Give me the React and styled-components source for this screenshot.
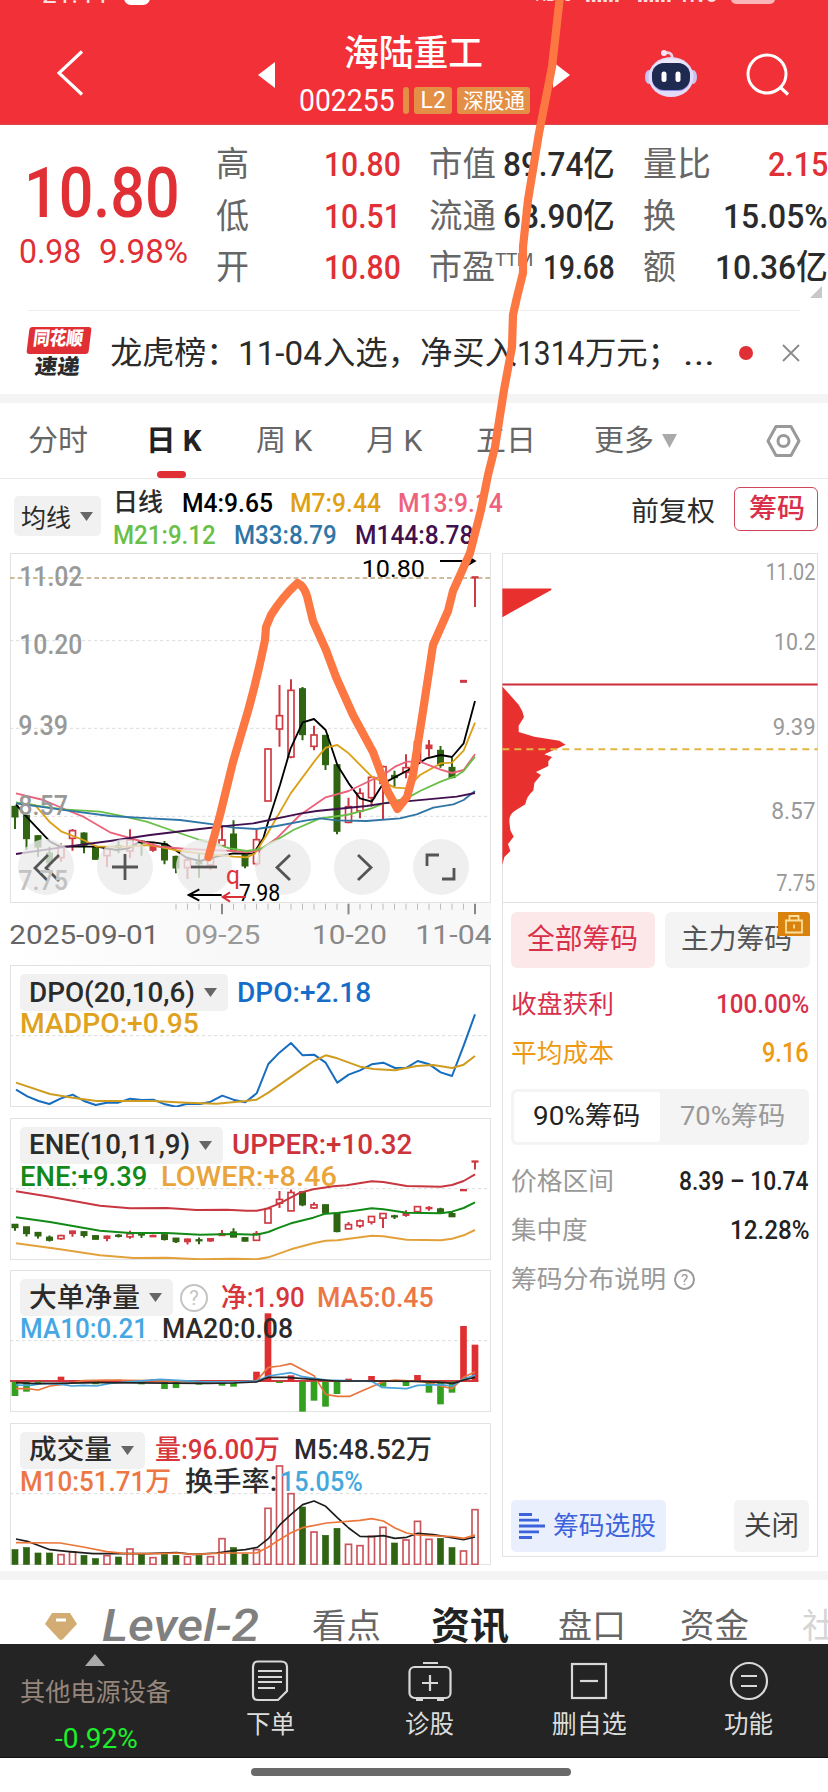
import { useLayoutEffect, useRef, useState } from "react";
import styled, { createGlobalStyle } from "styled-components";

const RED = "#e02f35";
const CANDLE_RED = "#cf3a42";
const GREEN = "#2f6512";

const GlobalStyle = createGlobalStyle`
  * {
    box-sizing: border-box;
  }
  body {
    margin: 0;
    background: #fff;
    font-family: Roboto, "Noto Sans CJK SC", sans-serif;
    color: #2b2b2b;
  }
  svg {
    display: block;
    flex: none;
  }
`;

// squeezes or stretches one line of text to the width of its column
const Fit = ({ w, children, ...rest }) => {
  const ref = useRef(null);
  const [scale, setScale] = useState(1);
  useLayoutEffect(() => {
    setScale(w / ref.current.offsetWidth);
  }, [w, children]);
  return (
    <FitBox $w={w} {...rest}>
      <span ref={ref} style={{ transform: `scaleX(${scale})` }}>
        {children}
      </span>
    </FitBox>
  );
};

const FitBox = styled.div`
  width: ${(p) => p.$w}px;
  flex: none;
  white-space: pre;
  margin-left: ${(p) => p.$ml || 0}px;
  color: ${(p) => p.$color || "inherit"};
  font-size: ${(p) => (p.$size ? `${p.$size}px` : "inherit")};
  font-weight: ${(p) => p.$weight || "inherit"};
  font-style: ${(p) => (p.$italic ? "italic" : "inherit")};
  line-height: ${(p) => (p.$line ? `${p.$line}px` : "inherit")};
  span {
    display: inline-block;
    transform-origin: left center;
  }
`;

const Page = styled.div`
  position: relative;
  width: 828px;
  height: 1792px;
  overflow: hidden;
`;

/* ---------- header ---------- */

const StatusBar = styled.div`
  height: 5px;
  overflow: hidden;
  display: flex;
  align-items: flex-end;
  padding: 0 54px 0 42px;
  color: rgba(255, 255, 255, 0.85);
  line-height: 20px;
  .pill {
    width: 26px;
    height: 20px;
    margin-left: 17px;
    border-radius: 7px;
    background: #fff;
    flex: none;
  }
  .battery {
    width: 44px;
    height: 20px;
    margin: 0 0 1px 14px;
    border-radius: 5px;
    background: #f9b5b8;
    flex: none;
  }
`;
const Header = styled.header`
  height: 125px;
  background: #f23037;
  border-bottom: 1px solid #d94a4e;
  color: #fff;
`;
const TitleBar = styled.div`
  display: flex;
  height: 119px;
  .back {
    margin: 45px 0 0 57px;
  }
  .prev {
    margin: 57px 0 0 174px;
  }
  .next {
    margin: 57px 0 0 22px;
  }
  .robot {
    margin: 38px 0 0 74px;
  }
  .search {
    margin: 46px 0 0 47px;
  }
`;
const Title = styled.div`
  width: 232px;
  margin-left: 24px;
  padding-top: 24px;
  font-weight: 500;
  .name {
    display: flex;
    padding-left: 45px;
    height: 50px;
    line-height: 50px;
  }
  .code {
    display: flex;
    margin-top: 8px;
    height: 27px;
    line-height: 28px;
  }
`;
const Badge = styled.div`
  height: 27px;
  margin-left: ${(p) => p.$ml}px;
  width: ${(p) => p.$w}px;
  background: #e38f45;
  border-radius: 3px;
  display: flex;
  justify-content: center;
  font-weight: 400;
`;

/* ---------- quote ---------- */

const Quote = styled.section`
  height: 185px;
  display: flex;
  position: relative;
  font-weight: 500;
  .corner {
    position: absolute;
    right: 6px;
    bottom: 12px;
  }
`;
const Price = styled.div`
  width: 216px;
  color: ${RED};
  .last {
    padding: 33px 0 0 24px;
    height: 109px;
    line-height: 70px;
  }
  .change {
    display: flex;
    padding: 0 0 0 19px;
    line-height: 34px;
    font-weight: 400;
  }
`;
const Cells = styled.div`
  padding-top: 13px;
  width: ${(p) => p.$w}px;
  margin-right: ${(p) => p.$gap}px;
  flex: none;
`;
const Cell = styled.div`
  display: flex;
  height: 51.5px;
  line-height: 52px;
  font-size: 34px;
  justify-content: space-between;
  .label {
    display: flex;
    color: #666;
    font-weight: 400;
  }
  sup {
    font-size: 19px;
    line-height: 38px;
    width: 0;
    letter-spacing: -0.5px;
    vertical-align: top;
  }
`;

const News = styled.section`
  height: 84px;
  border-top: 1px solid #ededed;
  margin: 0 28px;
  display: flex;
  align-items: center;
  line-height: 44px;
  .dot {
    width: 14px;
    height: 14px;
    border-radius: 50%;
    background: ${RED};
    margin-left: 24px;
  }
  > svg {
    margin-left: 29px;
  }
`;
const Logo = styled.div`
  width: 63px;
  margin-right: 20px;
  font-weight: 900;
  font-size: 19px;
  .top {
    background: ${RED};
    color: #fff;
    height: 27px;
    line-height: 24px;
    border-radius: 3px;
    padding-left: 5px;
    transform: skewX(-7deg);
  }
  .bottom {
    line-height: 22px;
    padding: 2px 0 0 7px;
    transform: skewX(-7deg);
  }
`;
const Band = styled.div`
  height: ${(p) => p.$h}px;
  background: #f4f4f4;
`;

/* ---------- period tabs ---------- */

const Tabs = styled.nav`
  display: flex;
  height: 76px;
  padding: 0 27px 0 28px;
  border-bottom: 1px solid #e9e9e9;
  line-height: 76px;
  color: #666;
  font-size: 29px;
  align-items: center;
  .settings {
    margin-left: auto;
  }
`;
const Tab = styled.div`
  position: relative;
  height: 75px;
  margin-right: ${(p) => p.$gap}px;
  color: ${(p) => (p.$active ? "#222" : "inherit")};
  font-weight: ${(p) => (p.$active ? 700 : 400)};
  &::after {
    content: "";
    display: ${(p) => (p.$active ? "block" : "none")};
    position: absolute;
    left: 11px;
    bottom: 0;
    width: 29px;
    height: 7px;
    border-radius: 4px;
    background: ${RED};
  }
`;

const Legend = styled.section`
  height: 74px;
  display: flex;
  padding: 0 10px 0 14px;
  font-size: 26px;
  font-weight: 500;
`;
const Select = styled.div`
  display: flex;
  align-items: center;
  height: ${(p) => p.$h || 37}px;
  width: ${(p) => p.$w}px;
  padding-left: ${(p) => p.$pad || 9}px;
  margin-top: ${(p) => p.$mt || 0}px;
  background: #f1f1f1;
  border-radius: 5px;
  flex: none;
  svg {
    margin-left: 9px;
  }
`;
const Averages = styled.div`
  width: 402px;
  margin-left: 12px;
  padding-top: 8px;
  .line {
    display: flex;
    height: 32px;
    line-height: 32px;
  }
`;
const ChipToggle = styled.button`
  width: 84px;
  height: 44px;
  margin: 8px 0 0 19px;
  padding: 0 0 0 13px;
  background: #fff;
  border: 1.5px solid #d1455a;
  border-radius: 6px;
  color: #d9304a;
  font: 500 27px/40px Roboto, "Noto Sans CJK SC", sans-serif;
`;

/* ---------- charts ---------- */

const Board = styled.main`
  display: flex;
  gap: 11px;
  padding: 0 9px 0 10px;
  height: 1018px;
`;
const Left = styled.div`
  width: 481px;
  flex: none;
`;
const ChartBox = styled.div`
  position: relative;
  height: ${(p) => p.$h}px;
  margin-bottom: ${(p) => p.$mb || 0}px;
  border: 1px solid #e2e2e2;
  > svg {
    position: absolute;
    left: -1px;
    top: -1px;
  }
`;
const Controls = styled.div`
  position: absolute;
  left: 7px;
  top: 285px;
  display: flex;
  gap: 23px;
`;
const RoundButton = styled.button`
  width: 56px;
  height: 56px;
  padding: 0;
  border: 0;
  border-radius: 50%;
  background: rgba(234, 234, 234, 0.78);
  display: grid;
  place-items: center;
`;
const Axis = styled.div`
  height: 62px;
  background: linear-gradient(90deg, #fff, #f8f8f8 45%);
`;
const Caption = styled.div`
  position: relative;
  padding: 8px 0 0 9px;
  font-size: 27px;
  font-weight: 500;
  .line {
    display: flex;
    align-items: center;
    height: 37px;
    line-height: 36px;
  }
  .second {
    height: 26px;
  }
`;
const Help = styled.div`
  width: ${(p) => p.$s}px;
  height: ${(p) => p.$s}px;
  line-height: ${(p) => p.$s - 3}px;
  margin-left: ${(p) => p.$ml}px;
  border: 2px solid ${(p) => p.$color};
  color: ${(p) => p.$color};
  border-radius: 50%;
  text-align: center;
  font-size: ${(p) => p.$s * 0.72}px;
  font-weight: 400;
  flex: none;
`;

/* ---------- chip distribution panel ---------- */

const Panel = styled.aside`
  width: 316px;
  height: 1004px;
  border: 1px solid #e2e2e2;
  display: flex;
  flex-direction: column;
  > svg {
    margin: -1px 0 0 -1px;
  }
`;
const PanelBody = styled.div`
  border-top: 1px solid #e3e3e3;
  padding: 9px 8px 4px 8px;
  flex: 1;
  display: flex;
  flex-direction: column;
`;
const Pair = styled.div`
  display: grid;
  grid-template-columns: 144px 145px;
  gap: 10px;
  margin-bottom: 12px;
`;
const PairButton = styled.div`
  position: relative;
  height: 56px;
  line-height: 55px;
  padding-left: 16px;
  border-radius: 6px;
  background: ${(p) => (p.$on ? "#fde8e9" : "#f4f4f4")};
  color: ${(p) => (p.$on ? "#d9304a" : "#555")};
  .lock {
    position: absolute;
    right: 0;
    top: 0;
    background: #da820e;
    border-radius: 0 4px 0 0;
  }
`;
const Row = styled.div`
  height: 49px;
  line-height: 49px;
  display: flex;
  align-items: center;
  justify-content: ${(p) => (p.$start ? "flex-start" : "space-between")};
  color: ${(p) => p.$color};
  font-size: 25.5px;
`;
const Segment = styled.div`
  display: flex;
  height: 56px;
  margin: 11px 0 12px;
  background: #f4f4f4;
  border-radius: 6px;
  padding: 3px;
  line-height: 49px;
  font-size: 26px;
  .on {
    width: 146px;
    padding-left: 19px;
    background: #fff;
    border-radius: 4px;
    color: #222;
  }
  .off {
    padding-left: 20px;
    color: #999;
  }
`;
const PanelFoot = styled.div`
  margin-top: auto;
  display: flex;
  justify-content: space-between;
`;
const FootButton = styled.div`
  height: 52px;
  line-height: 50px;
  width: ${(p) => p.$w}px;
  display: flex;
  align-items: center;
  gap: 7px;
  padding-left: ${(p) => p.$pad}px;
  border-radius: 5px;
  background: ${(p) => p.$bg};
  color: ${(p) => p.$color};
`;

/* ---------- bottom ---------- */

const Sections = styled.nav`
  height: 64px;
  display: flex;
  align-items: center;
  overflow: hidden;
  padding: 28px 0 0 44px;
  color: #666;
  font-size: 34px;
  line-height: 60px;
`;
const Toolbar = styled.footer`
  height: 114px;
  background: #242424;
  color: #ddd;
  display: flex;
  border-bottom: 1px solid #111;
`;
const Sector = styled.div`
  width: 190px;
  padding-left: 20px;
  .arrow {
    margin: 10px 0 1px 65px;
  }
`;
const Tool = styled.div`
  width: 159.5px;
  display: flex;
  flex-direction: column;
  align-items: center;
  padding: 16px 0 0 1px;
  line-height: 42px;
`;
const Home = styled.div`
  height: 34px;
  padding: 10px 0 0 251px;
  div {
    width: 320px;
    height: 8px;
    border-radius: 4px;
    background: #696969;
  }
`;
const Doodle = styled.svg`
  position: absolute;
  left: 0;
  top: 0;
  pointer-events: none;
`;

const Arrow = ({ color = "#666", w = 13, h = 9 }) => (
  <svg width={w} height={h} viewBox="0 0 13 9" preserveAspectRatio="none">
    <path d="M0 0h13L6.5 9z" fill={color} />
  </svg>
);

/* ---------- data ---------- */

const STEP = 34.5;
const xAt = (i) => 45 + i * STEP;

// kind, high, body top, body bottom, low
const candles = [
  ["g", 782, 785, 815, 852], ["g", 810, 812, 880, 915], ["g", 870, 873, 905, 935],
  ["g", 905, 925, 953, 968], ["r", 895, 905, 938, 950], ["r", 852, 857, 880, 917],
  ["g", 862, 865, 900, 925], ["g", 905, 908, 942, 944], ["r", 905, 912, 932, 966],
  ["g", 888, 903, 907, 925], ["r", 853, 885, 918, 940], ["g", 885, 889, 893, 932],
  ["r", 895, 905, 915, 920], ["g", 888, 898, 944, 958], ["g", 932, 935, 968, 985],
  ["r", 935, 945, 968, 1002], ["g", 925, 952, 956, 998], ["r", 930, 940, 960, 975],
  ["r", 845, 885, 902, 905], ["g", 826, 868, 918, 920], ["g", 928, 930, 962, 970],
  ["r", 855, 884, 956, 962], ["r", 610, 612, 768, 768], ["r", 420, 512, 552, 605],
  ["r", 403, 436, 636, 640], ["g", 426, 432, 568, 586], ["r", 542, 570, 604, 616],
  ["g", 570, 572, 658, 675], ["g", 658, 660, 858, 868], ["r", 758, 785, 832, 835],
  ["r", 730, 745, 798, 820], ["r", 692, 697, 758, 785], ["r", 662, 665, 715, 822],
  ["g", 677, 692, 697, 725], ["r", 628, 668, 682, 700], ["r", 585, 590, 645, 650],
  ["r", 585, 601, 610, 635], ["g", 603, 617, 660, 668], ["g", 638, 668, 697, 700],
  ["r", 407, 407, 411, 411], ["r", 96, 96, 98, 186],
];

const maLines = [
  ["#000", "48,778 82,818 150,890 180,905 290,905 350,915 385,910 420,890 460,892 500,898 560,938 600,948 650,935 700,925 760,926 790,880 800,845 840,720 872,610 908,532 942,522 977,555 1012,660 1046,715 1080,760 1115,770 1150,715 1225,675 1280,640 1322,630 1356,636 1391,595 1425,468"],
  ["#dca016", "48,775 105,780 150,832 185,860 250,885 290,905 380,905 450,900 500,910 540,918 600,925 700,935 740,937 765,925 800,870 872,745 950,640 977,608 1012,600 1046,625 1115,695 1185,728 1220,730 1260,690 1322,655 1356,653 1391,617 1425,533"],
  ["#ea627b", "48,745 130,765 200,795 250,815 330,862 400,882 480,905 560,912 700,918 740,922 780,915 830,880 900,810 977,757 1046,738 1115,705 1150,690 1185,665 1220,650 1260,650 1322,674 1356,684 1391,675 1425,628"],
  ["#69bf48", "48,772 130,785 190,793 300,800 360,812 440,830 520,858 600,885 690,910 740,918 780,912 830,885 880,855 960,820 1040,810 1115,790 1150,775 1220,760 1260,738 1322,710 1370,692 1391,678 1425,635"],
  ["#2f76a6", "48,775 200,796 330,813 450,820 540,825 640,838 700,848 770,852 830,843 920,826 960,820 1010,826 1100,828 1200,820 1250,808 1300,788 1360,778 1391,765 1425,738"],
  ["#41104f", "48,927 200,905 330,888 450,870 600,852 690,842 760,835 900,806 950,798 1100,783 1150,775 1250,766 1370,755 1425,744"],
];

const dpoLines = [
  ["#166dc0", "48,404 82,424 116,438 148,447 183,430 218,419 252,438 287,450 320,443 355,443 390,431 425,435 460,434 495,448 528,455 562,446 600,447 632,440 667,422 700,434 736,442 770,415 805,327 838,293 873,264 908,301 942,299 977,323 1012,383 1046,359 1080,346 1115,328 1150,323 1185,339 1220,338 1253,318 1288,328 1322,352 1356,363 1391,272 1425,178"],
  ["#cf9c20", "48,383 150,417 218,428 290,438 460,438 560,443 650,446 736,438 770,434 805,413 908,341 942,318 977,301 1012,310 1080,335 1120,342 1185,346 1250,333 1300,330 1356,339 1391,329 1425,303"],
];

const eneLines = [
  ["#c83740", "48,708 150,724 300,751 390,759 500,758 590,764 680,763 740,766 770,766 800,760 838,745 900,712 940,702 1000,693 1040,690 1115,678 1150,680 1220,692 1322,694 1356,689 1391,677 1425,657"],
  ["#128a17", "48,786 150,800 300,826 390,833 500,833 600,838 700,836 770,838 805,830 838,817 873,804 940,787 977,775 1012,773 1080,764 1115,759 1150,762 1220,772 1322,774 1356,769 1391,758 1425,741"],
  ["#e3a13b", "48,864 180,882 300,900 400,908 500,907 600,912 700,910 770,912 805,906 873,882 940,864 977,856 1012,855 1115,841 1150,843 1220,853 1322,855 1356,850 1391,840 1425,824"],
];

const netBars = {
  0: 408, 1: 395, 2: 372, 4: 350, 7: 373, 9: 359, 11: 373, 12: 358, 13: 387, 14: 384, 16: 374,
  18: 377, 19: 380, 21: 335, 22: 160, 23: 369, 24: 346, 25: 455, 26: 422, 27: 440, 28: 402,
  29: 356, 31: 348, 32: 380, 34: 378, 35: 345, 36: 398, 37: 433, 38: 398, 39: 198, 40: 254,
};
const netLines = [
  ["#e8743c", "48,386 80,386 115,390 150,378 200,372 250,362 320,360 440,362 600,366 740,366 770,362 805,322 840,318 873,311 942,347 977,403 1012,409 1050,409 1080,395 1120,378 1150,365 1185,360 1253,364 1290,368 1322,378 1356,386 1391,352 1425,335"],
  ["#47a3da", "48,375 90,376 130,370 185,373 215,378 250,376 290,378 330,370 480,358 600,365 700,366 770,363 805,348 873,338 908,350 980,360 1115,364 1145,382 1220,386 1253,376 1322,374 1356,378 1391,357 1425,345"],
  ["#222", "48,368 110,371 300,368 620,370 700,369 770,366 805,352 860,352 940,358 1010,363 1120,363 1260,364 1320,367 1360,370 1391,360 1425,352"],
];

const volumes =
  "g868 g862 g878 g878 r883 r875 g885 g895 r886 g890 r866 g882 r892 g882 g885 r889 g885 r889 r835 g862 g881 r868 r744 r617 r700 g740 r815 g825 g804 r852 r856 r828 r801 g848 r839 r783 r837 g834 g862 r872 r748".split(" ");
const volLines = [
  ["#1d1d1d", "48,836 82,843 150,868 200,873 280,880 440,880 530,877 580,882 650,878 690,872 736,868 772,861 805,835 840,793 873,762 908,733 942,722 977,738 1012,772 1046,803 1080,828 1115,829 1150,826 1185,834 1220,831 1253,819 1300,823 1391,838 1425,830"],
  ["#ec7538", "48,847 180,848 250,860 320,874 380,880 480,880 530,878 580,882 680,878 770,878 805,860 838,838 873,817 908,802 980,788 1080,780 1115,775 1150,782 1185,803 1220,818 1253,824 1356,829 1391,834 1425,824"],
];

/* ---------- chart parts ---------- */

const Lines = ({ data, width = 5 }) =>
  data.map(([color, points]) => (
    <polyline key={color} points={points} fill="none" stroke={color} strokeWidth={width} strokeLinejoin="round" />
  ));

const Candles = ({ project = (y) => y, solidUnder = 12 }) =>
  candles.map(([kind, ...ys], i) => {
    const [high, top, bottom, low] = ys.map(project);
    const x = xAt(i);
    const color = kind === "g" ? GREEN : CANDLE_RED;
    const solid = kind === "g" || bottom - top < solidUnder;
    return (
      <g key={i} stroke={color}>
        <path d={`M${x} ${high}V${top}M${x} ${bottom}V${low}`} strokeWidth="6" />
        <rect
          x={x - (solid ? 8 : 9)}
          y={top}
          width={solid ? 16 : 18}
          height={Math.max(bottom - top, 2)}
          fill={solid ? color : "#fff"}
          strokeWidth="5"
        />
      </g>
    );
  });

const SubChart = ({ top, children }) => (
  <svg width="481" height="142" viewBox={`30 ${top} 1443 426`}>
    <path d={`M30 ${top + 212}H1472`} stroke="#ddd" strokeWidth="3" strokeDasharray="10 8" />
    {children}
  </svg>
);

const Label = ({ x, y, w, size = 80, color = "#999", children, ...rest }) => (
  <text x={x} y={y} textLength={w} lengthAdjust="spacingAndGlyphs" fontSize={size} fill={color} {...rest}>
    {children}
  </text>
);

const MainChart = () => (
  <svg width="481" height="350" viewBox="30 24 1443 1050">
    <path d="M30 287H1472M30 550H1472M30 814H1472" stroke="#ddd" strokeWidth="3" strokeDasharray="10 8" />
    <path d="M30 99H1472" stroke="#c0a578" strokeWidth="4" strokeDasharray="14 9" />
    <Candles />
    <Lines data={maLines} width={5.5} />
    <g fontWeight="500">
      <Label x={58} y={123} w={189} size={84}>11.02</Label>
      <Label x={58} y={326} w={189} size={84}>10.20</Label>
      <Label x={55} y={570} w={149} size={84}>9.39</Label>
      <Label x={55} y={810} w={149} size={84}>8.57</Label>
    </g>
    <Label x={1085} y={97} w={190} size={74} color="#000">10.80</Label>
    <path d="M1320 48H1420M1400 33L1424 48L1400 62" stroke="#000" strokeWidth="6" fill="none" />
  </svg>
);

const controlIcons = [
  "M26 12L13 25L26 38M37 12L24 25L37 38",
  "M11 24H37M24 11V37",
  "M11 24H37",
  "M31 12L18 24.500L31 37",
  "M20 12L33 24.500L20 37",
  "M10 23V12H22M37 25V36H25",
];

// notes stay readable above the round buttons
const ChartNotes = () => (
  <svg width="481" height="350" viewBox="30 24 1443 1050" pointerEvents="none">
    <Label x={55} y={1035} w={149} size={84} color="#c2c2c2" fontWeight="500">7.75</Label>
    <Label x={678} y={1016} w={42} size={78} color="#e0353c">q</Label>
    <Label x={716} y={1068} w={125} size={74} color="#000">7.98</Label>
    <path d="M665 1050H566M598 1033L566 1050L598 1067" stroke="#000" strokeWidth="6" fill="none" />
    <path d="M738 1056H668M690 1042L668 1056L690 1070" stroke="#dc3037" strokeWidth="6" fill="none" />
  </svg>
);

const ticks = Array.from({ length: 27 }, (_, n) => n + 14);
const DateAxis = () => (
  <Axis>
    <svg width="481" height="60" viewBox="30 1075 1443 180">
      {ticks.map((i) => {
        const major = i === 18 || i === 29 || i === 40;
        return (
          <path key={i} d={`M${xAt(i)} 1077V${major ? 1109 : 1095}`} stroke={major ? "#888" : "#bbb"} strokeWidth={major ? 6 : 3} />
        );
      })}
      <Label x={28} y={1199} w={450} color="#666">2025-09-01</Label>
      <Label x={554} y={1199} w={227}>09-25</Label>
      <Label x={936} y={1199} w={225} color="#888">10-20</Label>
      <Label x={1246} y={1199} w={229} color="#888">11-04</Label>
    </svg>
  </Axis>
);

const Distribution = () => (
  <svg width="316" height="349" viewBox="38 24 948 1049" preserveAspectRatio="none">
    <path
      fill="#e8302f"
      d="M39 131H186V135L39 217ZM39 425L88 480Q100 497 104 517L88 543L88 562L135 576L210 588L229 600L165 629L188 637L177 650V664L140 682L155 691L135 715L132 738Q112 755 108 779L78 798Q60 808 60 830L63 857L73 877L56 899L63 920L45 938L39 962Z"
    />
    <path d="M39 419H985" stroke="#cd2e38" strokeWidth="6" />
    <path d="M39 614H985" stroke="#e3b545" strokeWidth="6" strokeDasharray="21 15" />
    <Label x={829} y={104} w={149} size={70}>11.02</Label>
    <Label x={854} y={315} w={125} size={70}>10.2</Label>
    <Label x={850} y={570} w={129} size={70}>9.39</Label>
    <Label x={846} y={825} w={133} size={70}>8.57</Label>
    <Label x={861} y={1040} w={117} size={70}>7.75</Label>
  </svg>
);

const ChartCaption = ({ name, nameW, selectW, help, first, second }) => (
  <Caption>
    <div className="line">
      <Select $w={selectW}>
        <Fit w={nameW}>{name}</Fit>
        <Arrow />
      </Select>
      {help && <Help $s={28} $ml={7} $color="#c4c4c4">?</Help>}
      {first.map(([text, w, ml, color]) => (
        <Fit key={text} w={w} $ml={ml} $color={color}>{text}</Fit>
      ))}
    </div>
    <div className="line second">
      {second.map(([text, w, ml, color]) => (
        <Fit key={text} w={w} $ml={ml} $color={color}>{text}</Fit>
      ))}
    </div>
  </Caption>
);

const Robot = () => (
  <svg className="robot" width="54" height="56" viewBox="0 0 54 56">
    <path d="M28 16C29 10 25 9 20 10" fill="none" stroke="#f0d3e6" strokeWidth="2.600" />
    <circle cx="20" cy="10" r="3" fill="#f4e6f6" />
    <ellipse cx="5" cy="34" rx="4" ry="7" fill="#c9c3f2" />
    <ellipse cx="49" cy="34" rx="4" ry="7" fill="#c9c3f2" />
    <ellipse cx="27" cy="34" rx="22.500" ry="20" fill="#e3dcf8" />
    <ellipse cx="27" cy="28" rx="18" ry="12" fill="#efe9fc" />
    <rect x="8" y="20" width="38" height="28" rx="12" fill="#8f8be8" />
    <rect x="8" y="20" width="38" height="27" rx="12" fill="#1f2a50" />
    <rect x="17.500" y="28.500" width="5" height="10.500" rx="2.500" fill="#fff" />
    <rect x="31.500" y="28.500" width="5" height="10.500" rx="2.500" fill="#fff" />
  </svg>
);

const toolIcons = {
  order: (
    <>
      <path d="M8 1.500H31Q37 1.500 37 7V31L28 40H8Q3 40 3 35V7Q3 1.500 8 1.500Z" />
      <path d="M8 11H32M8 17H32M8 22H32M8 28H25" />
    </>
  ),
  diagnose: (
    <>
      <rect x="-0.500" y="7" width="41" height="31" rx="5" />
      <path d="M13 3H28M20 15V31M12 23H28M6 40H13M27 40H34" />
    </>
  ),
  remove: (
    <>
      <rect x="3" y="4" width="34" height="34" />
      <path d="M11 21H29" />
    </>
  ),
  more: (
    <>
      <circle cx="20" cy="21" r="18" />
      <path d="M12 16H28M12 26H28" />
    </>
  ),
};

const columns = [
  { w: 185, gap: 28, cells: [["高", 33, "10.80", 77, RED], ["低", 33, "10.51", 77, RED], ["开", 33, "10.80", 77, RED]] },
  { w: 186, gap: 28, cells: [["市值", 67, "89.74亿", 112], ["流通", 67, "68.90亿", 112], ["市盈", 66, "19.68", 72, null, "TTM"]] },
  { w: 185, gap: 0, cells: [["量比", 68, "2.15", 60, RED], ["换", 33, "15.05%", 105], ["额", 33, "10.36亿", 113]] },
];

const App = () => {
  return (
    <Page>
      <GlobalStyle />
      <Header>
        <StatusBar>
          <Fit w={65} $size={25}>21:44</Fit>
          <div className="pill" />
          <Fit w={37} $ml={385} $size={17}>KB/s</Fit>
          <Fit w={35} $ml={13} $size={22} $weight={900}>ıııııı</Fit>
          <Fit w={35} $ml={17} $size={22} $weight={900}>ıııııı</Fit>
          <Fit w={35} $ml={10} $size={20} $weight={700}>HV8</Fit>
          <div className="battery" />
        </StatusBar>
        <TitleBar>
          <svg className="back" width="27" height="46" viewBox="0 0 27 46">
            <path d="M25 1.500L2 23L25 44.500" fill="none" stroke="#fff" strokeWidth="3.200" />
          </svg>
          <svg className="prev" width="17" height="26">
            <path d="M17 0V26L0 13Z" fill="#fff" />
          </svg>
          <Title>
            <div className="name">
              <Fit w={139} $size={36}>海陆重工</Fit>
            </div>
            <div className="code">
              <Fit w={96} $size={31} $weight={400}>002255</Fit>
              <Badge $ml={8} $w={6} />
              <Badge $ml={5} $w={38}>
                <Fit w={25} $size={23}>L2</Fit>
              </Badge>
              <Badge $ml={5} $w={73}>
                <Fit w={62} $size={21}>深股通</Fit>
              </Badge>
            </div>
          </Title>
          <svg className="next" width="17" height="26">
            <path d="M0 0V26L17 13Z" fill="#fff" />
          </svg>
          <Robot />
          <svg className="search" width="46" height="46" viewBox="0 0 46 46">
            <circle cx="22" cy="23" r="19" fill="none" stroke="#fff" strokeWidth="3" />
            <path d="M35 36L43 43.500" stroke="#fff" strokeWidth="3.200" />
          </svg>
        </TitleBar>
      </Header>

      <Quote>
        <Price>
          <div className="last">
            <Fit w={156} $size={70}>10.80</Fit>
          </div>
          <div className="change">
            <Fit w={62} $size={34}>0.98</Fit>
            <Fit w={89} $ml={18} $size={34}>9.98%</Fit>
          </div>
        </Price>
        {columns.map((col, i) => (
          <Cells key={i} $w={col.w} $gap={col.gap}>
            {col.cells.map(([label, labelW, value, valueW, color, note]) => (
              <Cell key={label}>
                <div className="label">
                  <Fit w={labelW}>{label}</Fit>
                  {note && <sup>{note}</sup>}
                </div>
                <Fit w={valueW} $color={color}>{value}</Fit>
              </Cell>
            ))}
          </Cells>
        ))}
        <svg className="corner" width="12" height="12">
          <path d="M12 0V12H0Z" fill="#c8c8c8" />
        </svg>
      </Quote>

      <News>
        <Logo>
          <div className="top">
            <Fit w={50}>同花顺</Fit>
          </div>
          <div className="bottom">
            <Fit w={45} $size={21}>速递</Fit>
          </div>
        </Logo>
        <Fit w={128} $size={32}>龙虎榜：</Fit>
        <Fit w={84} $size={34}>11-04</Fit>
        <Fit w={97} $ml={1} $size={32}>入选，</Fit>
        <Fit w={97} $size={32}>净买入</Fit>
        <Fit w={67} $size={34}>1314</Fit>
        <Fit w={94} $ml={1} $size={32}>万元；</Fit>
        <Fit w={32} $ml={4} $size={34}>...</Fit>
        <div className="dot" />
        <svg width="18" height="18" viewBox="0 0 18 18">
          <path d="M1 1L17 17M17 1L1 17" stroke="#8a8a8a" strokeWidth="1.800" />
        </svg>
      </News>
      <Band $h={9} />

      <Tabs>
        <Tab $gap={58}><Fit w={60}>分时</Fit></Tab>
        <Tab $gap={54} $active><Fit w={56}>日 K</Fit></Tab>
        <Tab $gap={54}><Fit w={56}>周 K</Fit></Tab>
        <Tab $gap={54}><Fit w={56}>月 K</Fit></Tab>
        <Tab $gap={58}><Fit w={60}>五日</Fit></Tab>
        <Tab $gap={8}><Fit w={60}>更多</Fit></Tab>
        <Arrow color="#aaa" w={15} h={14} />
        <svg className="settings" width="35" height="34" viewBox="0 0 35 34">
          <path d="M10 2.500H25L33 17L25 31.500H10L2 17Z" fill="none" stroke="#999" strokeWidth="3" strokeLinejoin="round" />
          <circle cx="17.500" cy="17" r="5.500" fill="none" stroke="#999" strokeWidth="3" />
        </svg>
      </Tabs>

      <Legend>
        <Select $w={87} $h={40} $pad={7} $mt={17}>
          <Fit w={50} $size={25} $weight={400}>均线</Fit>
          <Arrow w={13} />
        </Select>
        <Averages>
          <div className="line">
            <Fit w={50} $size={25}>日线</Fit>
            <Fit w={91} $ml={19} $color="#000">M4:9.65</Fit>
            <Fit w={91} $ml={17} $color="#dfa012">M7:9.44</Fit>
            <Fit w={105} $ml={17} $color="#ee627b">M13:9.14</Fit>
          </div>
          <div className="line">
            <Fit w={103} $color="#69bf48">M21:9.12</Fit>
            <Fit w={103} $ml={18} $color="#2f76a6">M33:8.79</Fit>
            <Fit w={118} $ml={18} $color="#41104f">M144:8.78</Fit>
          </div>
        </Averages>
        <Fit w={84} $ml={117} $size={27} $line={67} $weight={400}>前复权</Fit>
        <ChipToggle>
          <Fit w={56}>筹码</Fit>
        </ChipToggle>
      </Legend>

      <Board>
        <Left>
          <ChartBox $h={350}>
            <MainChart />
            <Controls>
              {controlIcons.map((d) => (
                <RoundButton key={d}>
                  <svg width="48" height="48" viewBox="0 0 48 48">
                    <path d={d} fill="none" stroke="#555" strokeWidth="2.800" />
                  </svg>
                </RoundButton>
              ))}
            </Controls>
            <ChartNotes />
          </ChartBox>
          <DateAxis />
          <ChartBox $h={142} $mb={10.5}>
            <SubChart top={30}>
              <Lines data={dpoLines} width={6} />
            </SubChart>
            <ChartCaption
              name="DPO(20,10,6)"
              nameW={166}
              selectW={208}
              first={[["DPO:+2.18", 134, 9, "#166dc9"]]}
              second={[["MADPO:+0.95", 179, 0, "#dfa21e"]]}
            />
          </ChartBox>
          <ChartBox $h={142} $mb={10.5}>
            <SubChart top={488}>
              <Candles project={(y) => 760 + (y - 612) * 0.276} solidUnder={9} />
              <Lines data={eneLines} width={6} />
            </SubChart>
            <ChartCaption
              name="ENE(10,11,9)"
              nameW={161}
              selectW={203}
              first={[["UPPER:+10.32", 180, 9, "#cd3339"]]}
              second={[["ENE:+9.39", 127, 0, "#128a17"], ["LOWER:+8.46", 176, 14, "#e9a53c"]]}
            />
          </ChartBox>
          <ChartBox $h={142} $mb={10.5}>
            <SubChart top={30}>
              <path d="M30 363H1435" stroke={CANDLE_RED} strokeWidth="6" />
              {Object.entries(netBars).map(([i, y]) => (
                <rect
                  key={i}
                  x={xAt(Number(i)) - 10}
                  y={Math.min(y, 365)}
                  width="20"
                  height={Math.abs(y - 365)}
                  fill={y < 365 ? "#e02f31" : "#34a01f"}
                />
              ))}
              <Lines data={netLines} />
            </SubChart>
            <ChartCaption
              name="大单净量"
              nameW={111}
              selectW={153}
              help
              first={[["净:1.90", 84, 13, "#d6363b"], ["MA5:0.45", 117, 12, "#ec7745"]]}
              second={[["MA10:0.21", 128, 0, "#45a8e4"], ["MA20:0.08", 131, 14, "#2b2b2b"]]}
            />
          </ChartBox>
          <ChartBox $h={142}>
            <SubChart top={488}>
              {volumes.map((v, i) => {
                const y = Number(v.slice(1));
                const green = v[0] === "g";
                return (
                  <rect
                    key={i}
                    x={xAt(i) - 9}
                    y={y}
                    width="18"
                    height={912 - y}
                    fill={green ? GREEN : "#fff"}
                    stroke={green ? GREEN : "#cb555c"}
                    strokeWidth={green ? 2 : 5}
                  />
                );
              })}
              <Lines data={volLines} />
            </SubChart>
            <ChartCaption
              name="成交量"
              nameW={83}
              selectW={125}
              first={[["量:96.00万", 125, 10, "#d6363b"], ["M5:48.52万", 138, 14, "#2b2b2b"]]}
              second={[["M10:51.71万", 151, 0, "#ec7745"], ["换手率:", 92, 14, "#2b2b2b"], ["15.05%", 83, 3, "#45a8dc"]]}
            />
          </ChartBox>
        </Left>

        <Panel>
          <Distribution />
          <PanelBody>
            <Pair>
              <PairButton $on>
                <Fit w={111} $size={28}>全部筹码</Fit>
              </PairButton>
              <PairButton>
                <Fit w={111} $size={28}>主力筹码</Fit>
                <svg className="lock" width="32" height="24" viewBox="0 0 32 24">
                  <path d="M8 8.500H24V20.500H8ZM11.500 8.500V4H20.500V8.500M16 12.500V16.500" fill="none" stroke="#fbdf9b" strokeWidth="1.800" />
                </svg>
              </PairButton>
            </Pair>
            <Row $color="#d9304a">
              <Fit w={103}>收盘获利</Fit>
              <Fit w={93} $size={26} $weight={500}>100.00%</Fit>
            </Row>
            <Row $color="#ee9a14">
              <Fit w={103}>平均成本</Fit>
              <Fit w={47} $size={27} $weight={500}>9.16</Fit>
            </Row>
            <Segment>
              <div className="on"><Fit w={107}>90%筹码</Fit></div>
              <div className="off"><Fit w={105}>70%筹码</Fit></div>
            </Segment>
            <Row $color="#999">
              <Fit w={103}>价格区间</Fit>
              <Fit w={130} $size={26} $color="#222" $weight={500}>8.39 – 10.74</Fit>
            </Row>
            <Row $color="#999">
              <Fit w={77}>集中度</Fit>
              <Fit w={79} $size={26} $color="#222" $weight={500}>12.28%</Fit>
            </Row>
            <Row $color="#999" $start>
              <Fit w={155}>筹码分布说明</Fit>
              <Help $s={21} $ml={8} $color="#999">?</Help>
            </Row>
            <PanelFoot>
              <FootButton $w={155} $pad={8} $bg="#e9effd" $color="#3d63dc">
                <svg width="27" height="26" viewBox="0 0 27 26">
                  <path d="M0 1.500H13M0 7.200H20M0 13H26M0 18.800H20M0 24.500H13" stroke="#3d63dc" strokeWidth="2.800" />
                </svg>
                <Fit w={103} $size={26}>筹码选股</Fit>
              </FootButton>
              <FootButton $w={75} $pad={10} $bg="#f4f4f4" $color="#444">
                <Fit w={55} $size={27}>关闭</Fit>
              </FootButton>
            </PanelFoot>
          </PanelBody>
        </Panel>
      </Board>
      <Band $h={9} />

      <Sections>
        <svg width="34" height="30" viewBox="0 0 34 30">
          <path d="M8 2H26L33 13L19 28Q17 30 15 28L1 13Z" fill="#d3ac74" />
          <path d="M12 9H22" stroke="#fff" strokeWidth="3" />
        </svg>
        <Fit w={157} $ml={24} $size={44} $weight={500} $italic $color="#808080">Level-2</Fit>
        <Fit w={69} $ml={53}>看点</Fit>
        <Fit w={78} $ml={50} $size={38} $weight={700} $color="#222">资讯</Fit>
        <Fit w={68} $ml={49}>盘口</Fit>
        <Fit w={69} $ml={54}>资金</Fit>
        <Fit w={34} $ml={53} $color="#d5d5d5">社</Fit>
      </Sections>

      <Toolbar>
        <Sector>
          <svg className="arrow" width="20" height="12">
            <path d="M10 0L20 12H0Z" fill="#aaa" />
          </svg>
          <Fit w={151} $size={25} $line={51} $color="#96867c">其他电源设备</Fit>
          <Fit w={83} $ml={35} $size={27} $line={42} $color="#1cf02c">-0.92%</Fit>
        </Sector>
        {[
          ["order", "下单", 49],
          ["diagnose", "诊股", 49],
          ["remove", "删自选", 75],
          ["more", "功能", 49],
        ].map(([icon, label, w]) => (
          <Tool key={icon}>
            <svg width="46" height="44" viewBox="-3 0 46 44" fill="none" stroke="#d8d8d8" strokeWidth="2.200">
              {toolIcons[icon]}
            </svg>
            <Fit w={w} $size={25}>{label}</Fit>
          </Tool>
        ))}
      </Toolbar>
      <Home>
        <div />
      </Home>

      <Doodle width="828" height="900" fill="none" stroke="#fc7742" strokeWidth="8.200" strokeLinejoin="round" strokeLinecap="round">
        <path d="M208.500 857L220 815L233 762L248 711Q257 679 265 640L266 627L271 615Q283 596 297.500 583Q304 586 307 596L313 621L326 650L336 677L353 715L373 752L388 792L397.500 809L407 797L413 775L423 711L433 645Q441 627 448 611L453 591L470 553L481 510L488 475L495 447L504 390L512 347L513 315L517 297L523 273V247L528 200L539 133L552 67L560 -4" />
      </Doodle>
    </Page>
  );
};

export default App;
